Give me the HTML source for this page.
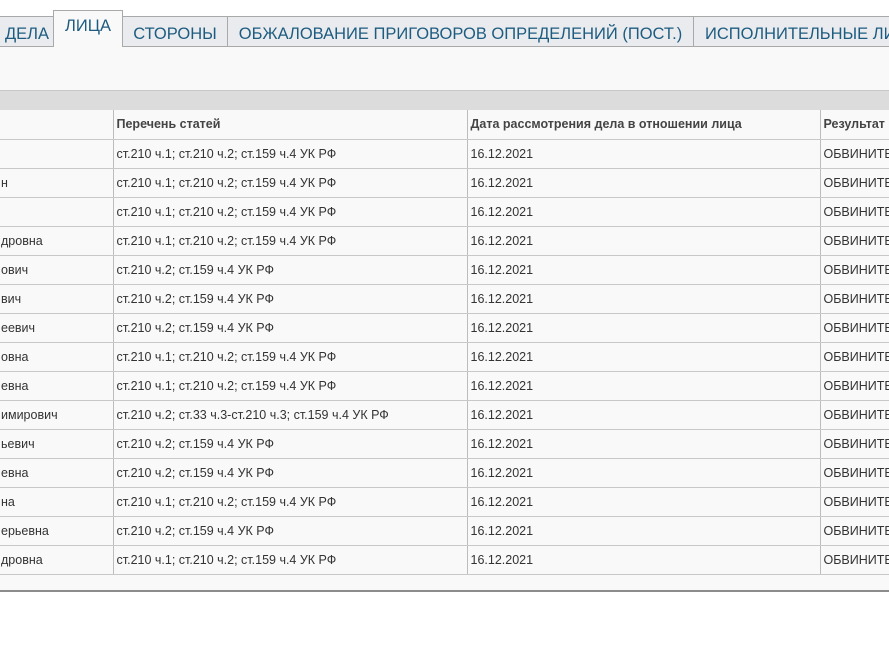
<!DOCTYPE html>
<html><head><meta charset="utf-8"><style>
*{margin:0;padding:0;box-sizing:border-box}
body{width:889px;height:667px;background:#fff;position:relative;overflow:hidden;font-family:"Liberation Sans",Arial,sans-serif}
.tab{position:absolute;top:16px;height:31px;background:#e9ebee;border:1px solid #a9a9a9;border-bottom:none;color:#1d5c80;font-size:16.5px;line-height:30px;padding-top:2px;text-align:center;white-space:nowrap;overflow:hidden}
.tab.act{top:10px;height:37px;background:#f9f9f9;line-height:30px;padding-top:0;z-index:2}
.panel{position:absolute;left:0;top:46px;width:889px;height:546px;background:#f9f9f9;border-top:1px solid #a9a9a9;border-bottom:2px solid #8c8c8c}
.band{position:absolute;left:0;top:90px;width:889px;height:21px;background:#dcdcdc;border-top:1px solid #c8c8c8}
table{position:absolute;left:-2px;top:110px;border-collapse:collapse;font-size:12.5px;color:#333;table-layout:fixed;width:935px}
td{height:29px;border-bottom:1px solid #c8c8c8;border-left:1px solid #bcbcbc;padding:0 0 0 3px;white-space:nowrap;overflow:hidden;background:#f9f9f9}
tr.h td{font-weight:bold;color:#444;height:29px}
td:first-child{border-left:none}
</style></head><body>
<div class="tab" style="left:-10px;width:64px;padding-left:10px">ДЕЛА</div>
<div class="tab act" style="left:53px;width:70px">ЛИЦА</div>
<div class="tab" style="left:122px;width:106px">СТОРОНЫ</div>
<div class="tab" style="left:227px;width:467px">ОБЖАЛОВАНИЕ ПРИГОВОРОВ ОПРЕДЕЛЕНИЙ (ПОСТ.)</div>
<div class="tab" style="left:693px;width:230px;text-align:left;padding-left:11px">ИСПОЛНИТЕЛЬНЫЕ ЛИСТЫ</div>
<div class="panel"></div>
<div class="band"></div>
<table>
<colgroup><col style="width:115px"><col style="width:354px"><col style="width:353px"><col style="width:113px"></colgroup>
<tr class="h"><td></td><td>Перечень статей</td><td>Дата рассмотрения дела в отношении лица</td><td>Результат</td></tr>
<tr><td></td><td>ст.210 ч.1; ст.210 ч.2; ст.159 ч.4 УК РФ</td><td>16.12.2021</td><td>ОБВИНИТЕЛЬНЫЙ</td></tr>
<tr><td>н</td><td>ст.210 ч.1; ст.210 ч.2; ст.159 ч.4 УК РФ</td><td>16.12.2021</td><td>ОБВИНИТЕЛЬНЫЙ</td></tr>
<tr><td></td><td>ст.210 ч.1; ст.210 ч.2; ст.159 ч.4 УК РФ</td><td>16.12.2021</td><td>ОБВИНИТЕЛЬНЫЙ</td></tr>
<tr><td>дровна</td><td>ст.210 ч.1; ст.210 ч.2; ст.159 ч.4 УК РФ</td><td>16.12.2021</td><td>ОБВИНИТЕЛЬНЫЙ</td></tr>
<tr><td>ович</td><td>ст.210 ч.2; ст.159 ч.4 УК РФ</td><td>16.12.2021</td><td>ОБВИНИТЕЛЬНЫЙ</td></tr>
<tr><td>вич</td><td>ст.210 ч.2; ст.159 ч.4 УК РФ</td><td>16.12.2021</td><td>ОБВИНИТЕЛЬНЫЙ</td></tr>
<tr><td>еевич</td><td>ст.210 ч.2; ст.159 ч.4 УК РФ</td><td>16.12.2021</td><td>ОБВИНИТЕЛЬНЫЙ</td></tr>
<tr><td>овна</td><td>ст.210 ч.1; ст.210 ч.2; ст.159 ч.4 УК РФ</td><td>16.12.2021</td><td>ОБВИНИТЕЛЬНЫЙ</td></tr>
<tr><td>евна</td><td>ст.210 ч.1; ст.210 ч.2; ст.159 ч.4 УК РФ</td><td>16.12.2021</td><td>ОБВИНИТЕЛЬНЫЙ</td></tr>
<tr><td>имирович</td><td>ст.210 ч.2; ст.33 ч.3-ст.210 ч.3; ст.159 ч.4 УК РФ</td><td>16.12.2021</td><td>ОБВИНИТЕЛЬНЫЙ</td></tr>
<tr><td>ьевич</td><td>ст.210 ч.2; ст.159 ч.4 УК РФ</td><td>16.12.2021</td><td>ОБВИНИТЕЛЬНЫЙ</td></tr>
<tr><td>евна</td><td>ст.210 ч.2; ст.159 ч.4 УК РФ</td><td>16.12.2021</td><td>ОБВИНИТЕЛЬНЫЙ</td></tr>
<tr><td>на</td><td>ст.210 ч.1; ст.210 ч.2; ст.159 ч.4 УК РФ</td><td>16.12.2021</td><td>ОБВИНИТЕЛЬНЫЙ</td></tr>
<tr><td>ерьевна</td><td>ст.210 ч.2; ст.159 ч.4 УК РФ</td><td>16.12.2021</td><td>ОБВИНИТЕЛЬНЫЙ</td></tr>
<tr><td>дровна</td><td>ст.210 ч.1; ст.210 ч.2; ст.159 ч.4 УК РФ</td><td>16.12.2021</td><td>ОБВИНИТЕЛЬНЫЙ</td></tr>
</table>
</body></html>
